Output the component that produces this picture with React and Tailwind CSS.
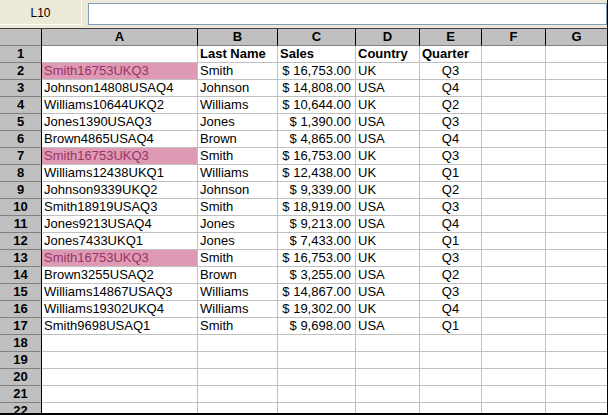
import React from "react";

const rows = [
  ["", "Last Name", "Sales", "Country", "Quarter", true],
  ["Smith16753UKQ3", "Smith", "$ 16,753.00", "UK", "Q3", false, true],
  ["Johnson14808USAQ4", "Johnson", "$ 14,808.00", "USA", "Q4"],
  ["Williams10644UKQ2", "Williams", "$ 10,644.00", "UK", "Q2"],
  ["Jones1390USAQ3", "Jones", "$ 1,390.00", "USA", "Q3"],
  ["Brown4865USAQ4", "Brown", "$ 4,865.00", "USA", "Q4"],
  ["Smith16753UKQ3", "Smith", "$ 16,753.00", "UK", "Q3", false, true],
  ["Williams12438UKQ1", "Williams", "$ 12,438.00", "UK", "Q1"],
  ["Johnson9339UKQ2", "Johnson", "$ 9,339.00", "UK", "Q2"],
  ["Smith18919USAQ3", "Smith", "$ 18,919.00", "USA", "Q3"],
  ["Jones9213USAQ4", "Jones", "$ 9,213.00", "USA", "Q4"],
  ["Jones7433UKQ1", "Jones", "$ 7,433.00", "UK", "Q1"],
  ["Smith16753UKQ3", "Smith", "$ 16,753.00", "UK", "Q3", false, true],
  ["Brown3255USAQ2", "Brown", "$ 3,255.00", "USA", "Q2"],
  ["Williams14867USAQ3", "Williams", "$ 14,867.00", "USA", "Q3"],
  ["Williams19302UKQ4", "Williams", "$ 19,302.00", "UK", "Q4"],
  ["Smith9698USAQ1", "Smith", "$ 9,698.00", "USA", "Q1"],
  ["", "", "", "", ""],
  ["", "", "", "", ""],
  ["", "", "", "", ""],
  ["", "", "", "", ""],
  ["", "", "", "", ""],
];

const cols = ["A", "B", "C", "D", "E", "F", "G"];

export default function App() {
  return (
    <div
      className="w-[608px] h-[415px] overflow-hidden bg-[#ECE9D8] flex flex-col border-r border-b-2 border-black text-[13px] text-black"
      style={{ fontFamily: '"Liberation Sans", Arial, sans-serif' }}
    >
      {/* toolbar */}
      <div className="h-[28px] flex shrink-0">
        <div className="w-[82px] h-[25px] border-r border-b border-white flex items-center justify-center text-[12px] pt-[2px]">
          L10
        </div>
        <div className="ml-[6px] mt-[3px] h-[22px] flex-1 bg-white border border-[#7F9DB9]" />
      </div>
      <div className="h-px bg-[#404040] shrink-0" />
      {/* grid */}
      <div className="grid grid-cols-[42px_156px_80px_78px_64px_62px_64px_61px] auto-rows-[17px] bg-white leading-[16px]">
        <div className="bg-[#C0C0C0] border-r border-r-black border-b border-b-[#808080]" />
        {cols.map((c, i) => (
          <div
            key={c}
            className={
              "bg-[#C0C0C0] border-b border-b-[#808080] text-center font-bold " +
              (i < 6 ? "border-r border-r-black" : "")
            }
          >
            {c}
          </div>
        ))}
        {rows.map((r, idx) => {
          const header = r[5];
          const pink = r[6];
          const bold = header ? " font-bold" : "";
          return (
            <React.Fragment key={idx}>
              <div className="bg-[#C0C0C0] border-r border-r-black border-b border-b-[#808080] text-center font-bold">
                {idx + 1}
              </div>
              <div
                className={
                  "border-r border-b border-[#C0C0C0] pl-[2px] whitespace-nowrap overflow-hidden" +
                  (pink ? " bg-[#DE9AB4] text-[#993366]" : "")
                }
              >
                {r[0]}
              </div>
              <div className={"border-r border-b border-[#C0C0C0] pl-[2px] whitespace-nowrap overflow-hidden" + bold}>
                {r[1]}
              </div>
              <div
                className={
                  "border-r border-b border-[#C0C0C0] whitespace-nowrap overflow-hidden" +
                  (header ? " pl-[2px] font-bold" : " text-right pr-[4px]")
                }
              >
                {r[2]}
              </div>
              <div className={"border-r border-b border-[#C0C0C0] pl-[2px] whitespace-nowrap overflow-hidden" + bold}>
                {r[3]}
              </div>
              <div
                className={
                  "border-r border-b border-[#C0C0C0] whitespace-nowrap overflow-hidden" +
                  (header ? " pl-[2px] font-bold" : " text-center")
                }
              >
                {r[4]}
              </div>
              <div className="border-r border-b border-[#C0C0C0]" />
              <div className="border-b border-[#C0C0C0]" />
            </React.Fragment>
          );
        })}
      </div>
    </div>
  );
}
